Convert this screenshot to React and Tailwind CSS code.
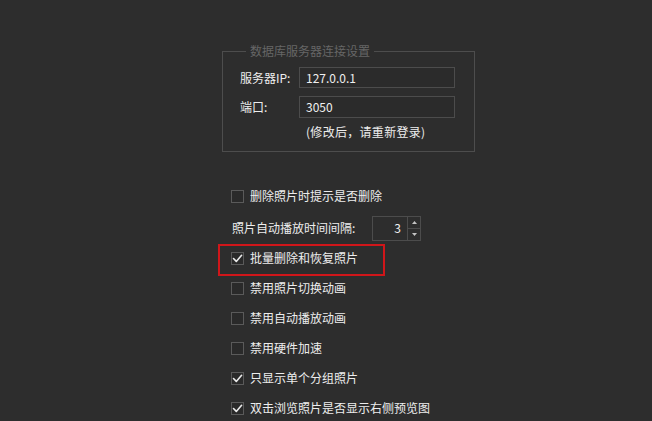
import React from 'react';

const font = { fontFamily: '"Noto Sans CJK SC", "Noto Sans", sans-serif' };

function Check({ checked }) {
  return (
    <span className="w-[13px] h-[13px] border border-[#5a5a5a] bg-[#2a2a2a] flex items-center justify-center shrink-0">
      {checked && (
        <svg width="11" height="11" viewBox="0 0 11 11" fill="none">
          <path d="M1.5 5.5 L4.3 8.4 L9.6 2.3" stroke="#ececec" strokeWidth="1.6" strokeLinecap="round" strokeLinejoin="round" />
        </svg>
      )}
    </span>
  );
}

function Row({ checked, label, children }) {
  return (
    <div className="relative h-[30px] flex items-center gap-[6px] pl-[231px]">
      <Check checked={checked} />
      <span className="text-[12px] text-[#ededed] leading-none whitespace-nowrap">{label}</span>
      {children}
    </div>
  );
}

export default function App() {
  return (
    <div className="w-[652px] h-[421px] bg-[#2d2d2d] overflow-hidden select-none" style={font}>
      <fieldset className="ml-[222px] mt-[43px] w-[253px] h-[109px] border border-[#4d4d4d] pl-[17px] pt-[8px]">
        <legend className="ml-[6px] px-[4px] text-[12px] leading-[16px] text-[#666666]">数据库服务器连接设置</legend>
        <div className="flex flex-col gap-[8px]">
          <div className="flex items-center">
            <span className="w-[59px] shrink-0 whitespace-nowrap text-[12px] text-[#ededed]">服务器IP:</span>
            <div className="w-[156px] h-[21px] border border-[#4c4c4c] bg-[#2b2b2b] flex items-center pl-[6px] text-[12px] text-[#f0f0f0]">127.0.0.1</div>
          </div>
          <div className="flex items-center">
            <span className="w-[59px] shrink-0 whitespace-nowrap text-[12px] text-[#ededed]">端口:</span>
            <div className="w-[156px] h-[22px] border border-[#4c4c4c] bg-[#2b2b2b] flex items-center pl-[6px] text-[12px] text-[#f0f0f0]">3050</div>
          </div>
          <div className="pl-[66px] whitespace-nowrap text-[12px] text-[#ededed] leading-[16px] mt-[-2px] tracking-[0.3px]">(修改后，请重新登录)</div>
        </div>
      </fieldset>

      <div className="mt-[29px] flex flex-col">
        <Row checked={false} label="删除照片时提示是否删除" />
        <div className="h-[30px] mt-[2px] flex items-center pl-[232px]">
          <span className="w-[140px] shrink-0 whitespace-nowrap text-[12px] text-[#ededed]">照片自动播放时间间隔:</span>
          <div className="w-[49px] h-[25px] border border-[#4c4c4c] flex">
            <div className="flex-1 flex items-center justify-end pr-[6px] text-[12px] text-[#f0f0f0]">3</div>
            <div className="w-[13px] border-l border-[#4c4c4c] flex flex-col">
              <div className="flex-1 flex items-center justify-center border-b border-[#4c4c4c]">
                <svg width="5" height="3" viewBox="0 0 5 3"><path d="M0 3 L2.5 0 L5 3 Z" fill="#c4c4c4" /></svg>
              </div>
              <div className="flex-1 flex items-center justify-center">
                <svg width="5" height="3" viewBox="0 0 5 3"><path d="M0 0 L2.5 3 L5 0 Z" fill="#c4c4c4" /></svg>
              </div>
            </div>
          </div>
        </div>
        <Row checked={true} label="批量删除和恢复照片">
          <span className="absolute left-[218px] top-[1px] w-[167px] h-[32px] border-2 border-[#d0161a]" />
        </Row>
        <Row checked={false} label="禁用照片切换动画" />
        <Row checked={false} label="禁用自动播放动画" />
        <Row checked={false} label="禁用硬件加速" />
        <Row checked={true} label="只显示单个分组照片" />
        <Row checked={true} label="双击浏览照片是否显示右侧预览图" />
      </div>
    </div>
  );
}
